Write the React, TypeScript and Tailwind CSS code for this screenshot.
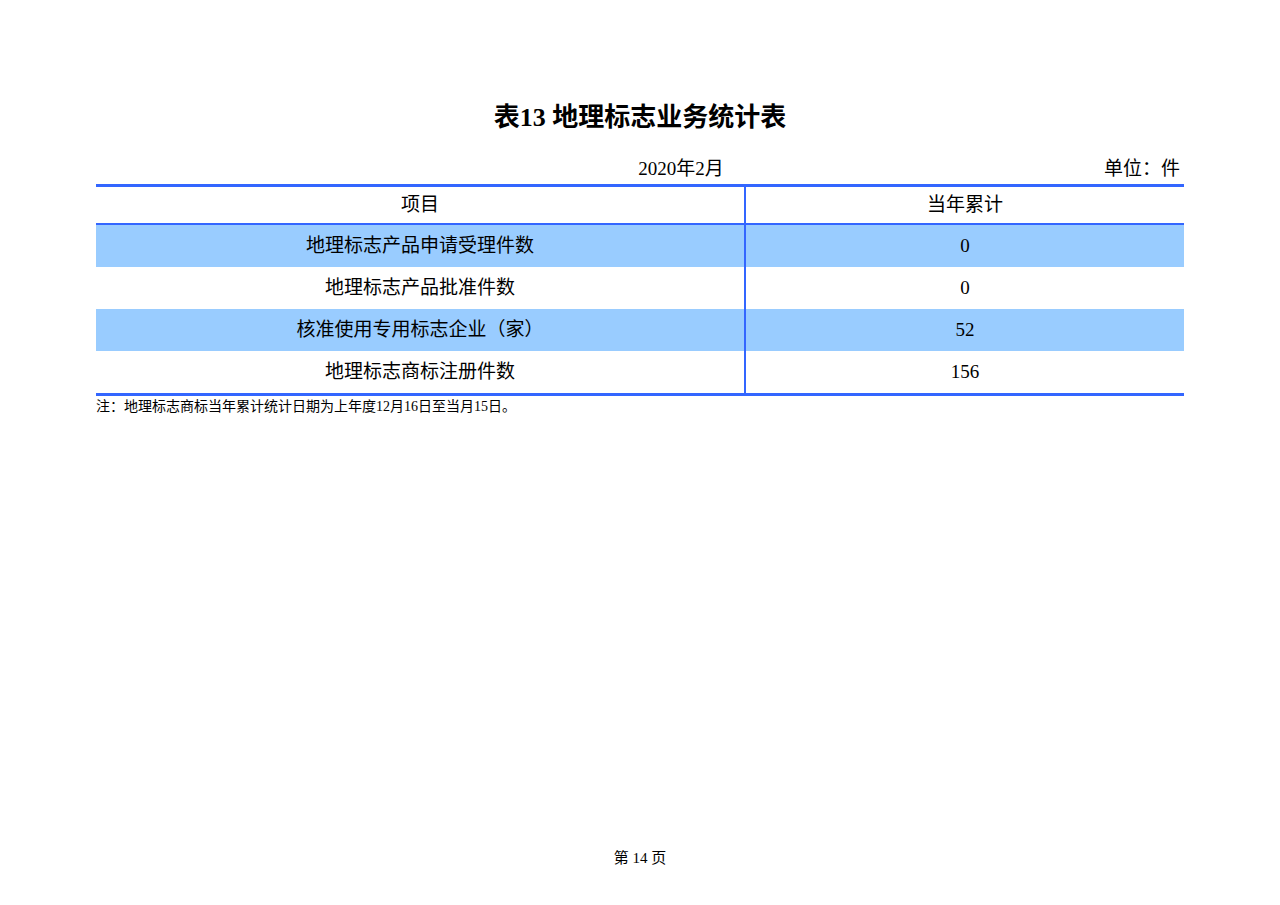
const rows = [
  { name: '地理标志产品申请受理件数', value: '0', shaded: true },
  { name: '地理标志产品批准件数', value: '0', shaded: false },
  { name: '核准使用专用标志企业（家）', value: '52', shaded: true },
  { name: '地理标志商标注册件数', value: '156', shaded: false },
];

const font = { fontFamily: '"Liberation Serif", "Noto Sans CJK SC", serif' };

export default function App() {
  return (
    <div className="w-[1280px] h-[905px] bg-white text-black flex flex-col" style={font}>
      <h1 className="pt-[100px] text-center text-[26px] leading-[36px] font-bold">表13 地理标志业务统计表</h1>
      <div className="mx-[96px] mt-[18px] flex flex-col">
        <div className="relative h-[30px] text-[19px] leading-[30px]">
          <div className="text-center pl-[82px]">2020年2月</div>
          <div className="absolute right-[4px] top-0">单位：件</div>
        </div>
        <div className="border-t-[3px] border-b-[3px] border-[#3366ff]">
          <div className="flex h-[38px] border-b-[2px] border-[#3366ff] text-[19px]">
            <div className="w-[650px] flex items-center justify-center border-r-2 border-[#3366ff]">项目</div>
            <div className="flex-1 flex items-center justify-center">当年累计</div>
          </div>
          {rows.map((r) => (
            <div key={r.name} className={`flex h-[42px] text-[19px] ${r.shaded ? 'bg-[#99ccff]' : 'bg-white'}`}>
              <div className="w-[650px] flex items-center justify-center border-r-2 border-[#3366ff]">{r.name}</div>
              <div className="flex-1 flex items-center justify-center">{r.value}</div>
            </div>
          ))}
        </div>
        <div className="mt-[2px] text-[14px] leading-[18px]">注：地理标志商标当年累计统计日期为上年度12月16日至当月15日。</div>
      </div>
      <div className="mt-auto mb-[36px] text-center text-[15px]">第 14 页</div>
    </div>
  );
}
